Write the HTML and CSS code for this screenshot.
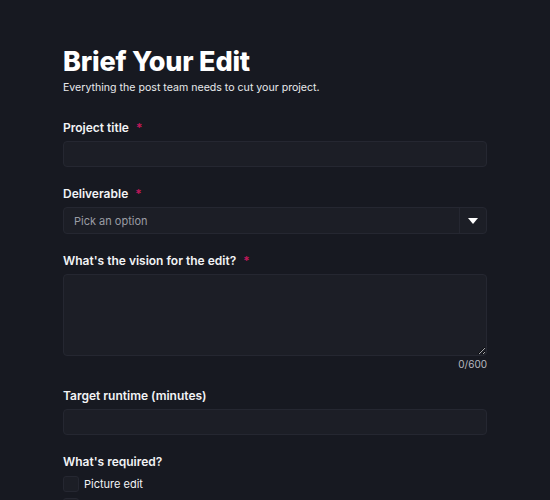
FILE: index.html
```html
<!DOCTYPE html>
<html lang="en">
<head>
<meta charset="utf-8">
<title>Brief Your Edit</title>
<link rel="stylesheet" href="styles.css">
</head>
<body>
<main class="page">
  <header class="head">
    <h1 class="title">Brief Your Edit</h1>
    <p class="subtitle">Everything the post team needs to cut your project.</p>
  </header>

  <div class="field">
    <label class="label">Project title <span class="req">*</span></label>
    <input class="input" type="text">
  </div>

  <div class="field">
    <label class="label">Deliverable <span class="req">*</span></label>
    <div class="select">
      <span class="placeholder">Pick an option</span>
      <span class="select-btn">
        <svg width="10" height="6" viewBox="0 0 10 6"><path d="M0 0H10L5 6Z" fill="#fff"/></svg>
      </span>
    </div>
  </div>

  <div class="field field-ta">
    <label class="label">What's the vision for the edit? <span class="req">*</span></label>
    <textarea class="textarea"></textarea>
    <div class="counter">0/600</div>
  </div>

  <div class="field">
    <label class="label">Target runtime (minutes)</label>
    <input class="input" type="text">
  </div>

  <div class="field">
    <label class="label">What's required?</label>
    <div class="checks">
      <div class="check"><span class="box"></span><span>Picture edit</span></div>
      <div class="check"><span class="box"></span><span>Colour grade</span></div>
    </div>
  </div>
</main>
</body>
</html>
```

FILE: styles.css
```css
html, body {
  margin: 0;
  padding: 0;
  background: #171921;
  color: #f2f3f5;
  font-family: Inter, "Noto Sans", sans-serif;
}
.page {
  width: 424px;
  margin: 0 auto;
  padding: 46px 0 0 0;
  box-sizing: border-box;
  display: flex;
  flex-direction: column;
}
.head { margin-bottom: 25px; }
.title {
  margin: 0;
  font-size: 27px;
  font-weight: 800;
  line-height: 32px;
  letter-spacing: -0.2px;
  color: #fff;
}
.subtitle {
  margin: 3px 0 0 0;
  font-size: 10.6px;
  line-height: 14px;
  color: #e8e9ec;
}
.field {
  display: flex;
  flex-direction: column;
  margin-bottom: 19px;
}
.field-ta { margin-bottom: 18px; }
.label {
  font-size: 12px;
  font-weight: 600;
  line-height: 16px;
  margin-bottom: 5px;
  color: #f2f3f5;
}
.req {
  color: #c2185b;
  margin-left: 4px;
}
.input, .select, .textarea {
  box-sizing: border-box;
  width: 100%;
  background: #1c1e26;
  border: 1px solid #252731;
  border-radius: 4px;
  margin: 0;
}
.input { height: 26px; }
.select {
  height: 27px;
  display: flex;
  align-items: center;
  justify-content: space-between;
}
.placeholder {
  padding-left: 10px;
  font-size: 11px;
  color: #9a9ca4;
}
.select-btn {
  width: 26px;
  height: 100%;
  border-left: 1px solid #252731;
  display: flex;
  align-items: center;
  justify-content: center;
}
.textarea {
  height: 82px;
  resize: vertical;
  display: block;
}
.counter {
  margin-top: 2px;
  text-align: right;
  font-size: 10px;
  line-height: 12px;
  color: #b8bac0;
}
.checks {
  display: flex;
  flex-direction: column;
  gap: 6px;
  margin-top: 1px;
}
.check {
  display: flex;
  align-items: center;
  gap: 5px;
  font-size: 11px;
  color: #f2f3f5;
}
.box {
  box-sizing: border-box;
  width: 16px;
  height: 16px;
  background: #1c1e26;
  border: 1px solid #252731;
  border-radius: 3px;
}
```
